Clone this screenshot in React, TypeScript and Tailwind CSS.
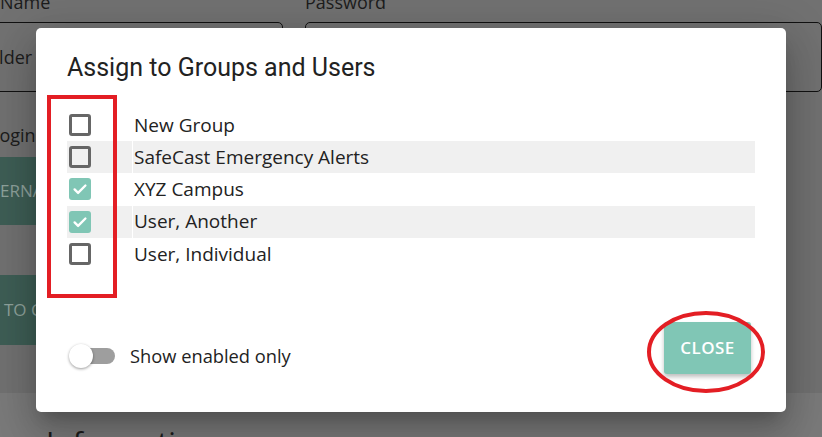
import React from "react"

interface Row {
  label: string
  checked: boolean
}

const rows: Row[] = [
  { label: "New Group", checked: false },
  { label: "SafeCast Emergency Alerts", checked: false },
  { label: "XYZ Campus", checked: true },
  { label: "User, Another", checked: true },
  { label: "User, Individual", checked: false },
]

function Box({ checked }: { checked: boolean }) {
  if (checked) {
    return (
      <div className="flex h-[22px] w-[22px] items-center justify-center rounded-[3px] bg-[#80c6b5]">
        <svg viewBox="0 0 24 24" className="h-[20px] w-[20px]" fill="none" stroke="white" strokeWidth="2.8" strokeLinecap="round" strokeLinejoin="round">
          <path d="M5.5 12.5l4.2 4.2L18.5 7.8" />
        </svg>
      </div>
    )
  }
  return <div className="h-[22px] w-[22px] rounded-[3px] border-[3px] border-[#666666]" />
}

export default function App() {
  return (
    <div
      className="relative h-[437px] w-[822px] overflow-hidden bg-[#717171] text-[#1c1c1c]"
      style={{ fontFamily: '"Open Sans", "Noto Sans", sans-serif' }}
    >
      {/* page behind the dialog */}
      <div className="flex flex-col">
        <div className="-mt-[12px] flex h-[28px] items-center text-[18px]">
          <span className="w-[305px]">Name</span>
          <span>Password</span>
        </div>
        <div className="mt-[6px] flex h-[70px] gap-[22px]">
          <div className="-ml-[10px] flex w-[293px] items-center rounded-[5px] border border-[#111] text-[18px]">
            <span className="-ml-[12px]">Folder</span>
          </div>
          <div className="flex-1 rounded-[5px] border border-[#111]" />
        </div>
        <div className="mt-[30px] -ml-[10px] text-[18px]">Logins</div>
        <div className="mt-[8px] -ml-[60px] flex h-[68px] w-[200px] items-center bg-[#3e5e55] pl-[60px] text-[17px] text-[#8fa29c]">
          ERNAL
        </div>
        <div className="mt-[50px] -ml-[60px] flex h-[70px] w-[200px] items-center bg-[#3e5e55] pl-[64px] text-[17px] text-[#8fa29c]">
          TO CAMPUS
        </div>
        <div className="mt-[48px] h-[60px] bg-[#7a7a7a] pl-[46px] pt-[34px] text-[30px] leading-none">
          Information
        </div>
      </div>

      {/* dialog */}
      <div className="absolute left-[36px] top-[28px] flex h-[384px] w-[750px] flex-col rounded-[5px] bg-white shadow-[0_11px_15px_-7px_rgba(0,0,0,0.2),0_24px_38px_3px_rgba(0,0,0,0.14),0_9px_46px_8px_rgba(0,0,0,0.12)]">
        <h2
          className="pl-[31px] pt-[24px] text-[25px] leading-8 text-[#222]"
          style={{ fontFamily: 'Roboto, "Liberation Sans", sans-serif' }}
        >
          Assign to Groups and Users
        </h2>

        <div className="ml-[31px] mt-[25px] w-[688px] text-[19px] text-[#222]">
          {rows.map((row, i) => (
            <div key={row.label} className={"flex h-[32.2px] " + (i % 2 === 1 ? "bg-[#f0f0f0]" : "")}>
              <div className="flex w-[66px] items-center border-r border-white pl-[2px]">
                <Box checked={row.checked} />
              </div>
              <div className="flex items-center pl-[1px]">{row.label}</div>
            </div>
          ))}
        </div>

        <div className="mt-auto flex items-start justify-between pb-[38px] pl-[33px] pr-[35px]">
          <div className="mt-[20px] flex items-center">
            <div className="relative h-[24px] w-[46px]">
              <div className="absolute left-[6px] top-[4px] h-[16px] w-[40px] rounded-full bg-[#9e9e9e]" />
              <div className="absolute left-0 top-0 h-[24px] w-[24px] rounded-full bg-white shadow-[0_1px_3px_rgba(0,0,0,0.4)]" />
            </div>
            <span className="ml-[15px] text-[18.3px] text-[#222]">Show enabled only</span>
          </div>
          <button className="flex h-[52px] w-[87px] items-center justify-center rounded-[3px] bg-[#80c6b5] text-[17px] font-semibold tracking-[0.5px] text-white shadow-[0_3px_4px_rgba(0,0,0,0.25)]">
            CLOSE
          </button>
        </div>

        {/* annotation: red box */}
        <div className="absolute left-[11px] top-[67px] h-[203px] w-[70px] border-[4px] border-[#e31e24]" />
      </div>

      {/* annotation: red ellipse */}
      <svg className="absolute left-[644px] top-[308px]" width="124" height="88" viewBox="0 0 124 88">
        <ellipse cx="62" cy="44" rx="57" ry="39" fill="none" stroke="#e31e24" strokeWidth="4" />
      </svg>
    </div>
  )
}
